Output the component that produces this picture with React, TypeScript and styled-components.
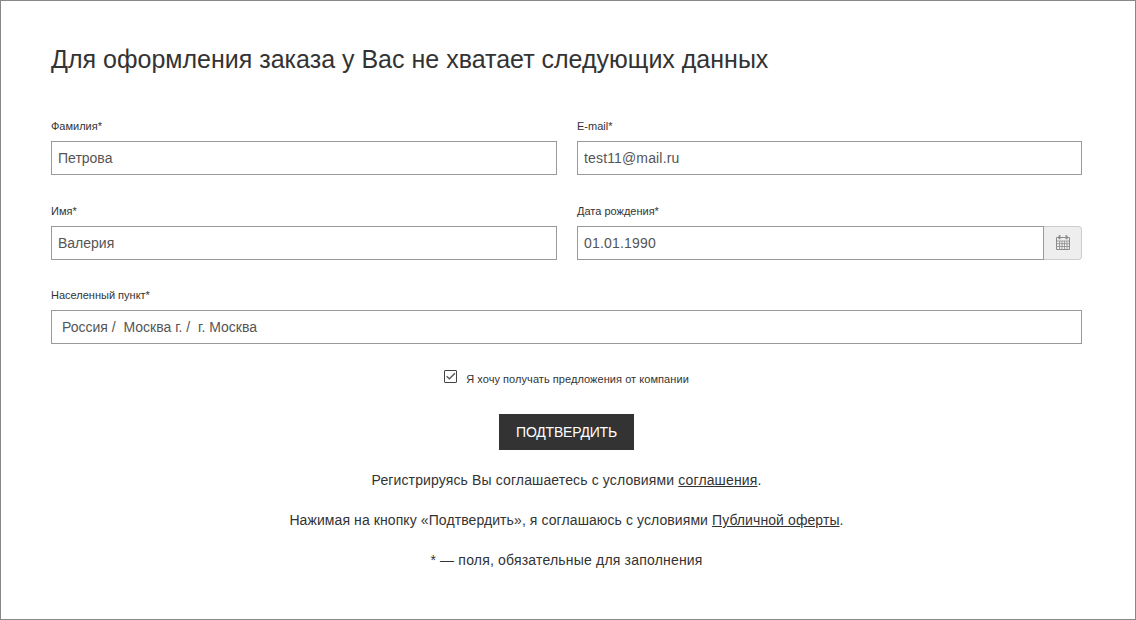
import React from 'react';
import styled, { createGlobalStyle } from 'styled-components';

const GlobalStyle = createGlobalStyle`
  html, body {
    margin: 0;
    padding: 0;
    background: #fff;
  }
`;

const Page = styled.div`
  box-sizing: border-box;
  width: 1136px;
  height: 620px;
  border: 1px solid #888;
  padding: 43px 53px 0 50px;
  font-family: "Liberation Sans", Arial, sans-serif;
  color: #333;
  overflow: hidden;
`;

const Title = styled.h1`
  margin: 0 0 45px;
  font-size: 25px;
  line-height: 30px;
  font-weight: 400;
  color: #333;
`;

const FormGrid = styled.div`
  display: grid;
  grid-template-columns: 506px 505px;
  column-gap: 20px;
  row-gap: 28.5px;
`;

const Field = styled.div<{ $wide?: boolean }>`
  grid-column: ${(p) => (p.$wide ? '1 / -1' : 'auto')};
`;

const Label = styled.label`
  display: block;
  height: 14px;
  margin-bottom: 8px;
  font-size: 11px;
  line-height: 14px;
  color: #333;
`;

const InputRow = styled.div`
  display: flex;
  height: 34px;
`;

const Input = styled.input<{ $inset?: number; $spacing?: number }>`
  box-sizing: border-box;
  flex: 1;
  min-width: 0;
  height: 34px;
  margin: 0;
  padding: 0 ${(p) => p.$inset ?? 6}px;
  border: 1px solid #999;
  border-radius: 0;
  outline: none;
  background: #fff;
  font-family: inherit;
  font-size: 14px;
  letter-spacing: ${(p) => p.$spacing ?? 0}px;
  color: #555;
`;

const CalendarAddon = styled.span`
  box-sizing: border-box;
  display: flex;
  align-items: center;
  justify-content: center;
  width: 38px;
  height: 34px;
  border: 1px solid #ccc;
  border-left: 0;
  border-radius: 0 4px 4px 0;
  background: #eee;
  color: #8c8c8c;
`;

const CheckRow = styled.label`
  display: flex;
  align-items: center;
  justify-content: center;
  gap: 9px;
  margin-top: 25px;
  height: 18px;
  font-size: 11px;
  letter-spacing: 0.06px;
  color: #333;
`;

const CheckBox = styled.span`
  box-sizing: border-box;
  display: flex;
  width: 13px;
  height: 13px;
  margin-top: -3px;
  border: 1px solid #444;
  border-radius: 1px;
`;

const CheckText = styled.span`
  margin-top: 2px;
`;

const ButtonRow = styled.div`
  display: flex;
  justify-content: center;
  margin-top: 27px;
`;

const SubmitButton = styled.button`
  width: 135px;
  height: 36px;
  padding: 0;
  border: 0;
  background: #333;
  color: #fff;
  font-family: inherit;
  font-size: 14px;
  letter-spacing: -0.2px;
`;

const Note = styled.p<{ $spacing: number }>`
  margin: 0;
  height: 40px;
  font-size: 14px;
  line-height: 20px;
  letter-spacing: ${(p) => p.$spacing}px;
  text-align: center;
  color: #333;
`;

const Notes = styled.div`
  margin-top: 20px;
`;

const NoteLink = styled.a`
  color: #333;
  text-decoration: underline;
`;

const CalendarIcon = () => (
  <svg width="14" height="15" viewBox="0 0 14 15" fill="none">
    <path d="M.5 2.5h13v12H.5z" stroke="currentColor" />
    <path d="M.5 6h13M.5 8.7h13M.5 11.5h13M3.5 6v8.5M6 6v8.5M8.5 6v8.5M11 6v8.5" stroke="currentColor" strokeWidth=".8" />
    <path d="M3.5 .2v4M10.5 .2v4" stroke="currentColor" strokeWidth="2" />
  </svg>
);

const CheckMark = () => (
  <svg width="11" height="11" viewBox="0 0 11 11" fill="none">
    <path d="M1.6 5.2l2.8 2.6 5.6-5.6" stroke="#555" strokeWidth="1.3" />
  </svg>
);

export default function App() {
  return (
    <Page>
      <GlobalStyle />
      <Title>Для оформления заказа у Вас не хватает следующих данных</Title>
      <FormGrid>
        <Field>
          <Label>Фамилия*</Label>
          <InputRow><Input defaultValue="Петрова" /></InputRow>
        </Field>
        <Field>
          <Label>E-mail*</Label>
          <InputRow><Input $spacing={0.15} defaultValue="test11@mail.ru" /></InputRow>
        </Field>
        <Field>
          <Label>Имя*</Label>
          <InputRow><Input defaultValue="Валерия" /></InputRow>
        </Field>
        <Field>
          <Label>Дата рождения*</Label>
          <InputRow>
            <Input $spacing={0.2} defaultValue="01.01.1990" />
            <CalendarAddon><CalendarIcon /></CalendarAddon>
          </InputRow>
        </Field>
        <Field $wide>
          <Label>Населенный пункт*</Label>
          <InputRow><Input $inset={10} defaultValue="Россия /  Москва г. /  г. Москва" /></InputRow>
        </Field>
      </FormGrid>
      <CheckRow>
        <CheckBox><CheckMark /></CheckBox>
        <CheckText>Я хочу получать предложения от компании</CheckText>
      </CheckRow>
      <ButtonRow>
        <SubmitButton>ПОДТВЕРДИТЬ</SubmitButton>
      </ButtonRow>
      <Notes>
        <Note $spacing={0.13}>Регистрируясь Вы соглашаетесь с условиями <NoteLink href="#">соглашения</NoteLink>.</Note>
        <Note $spacing={0.09}>Нажимая на кнопку «Подтвердить», я соглашаюсь с условиями <NoteLink href="#">Публичной оферты</NoteLink>.</Note>
        <Note $spacing={0.19}>* — поля, обязательные для заполнения</Note>
      </Notes>
    </Page>
  );
}
